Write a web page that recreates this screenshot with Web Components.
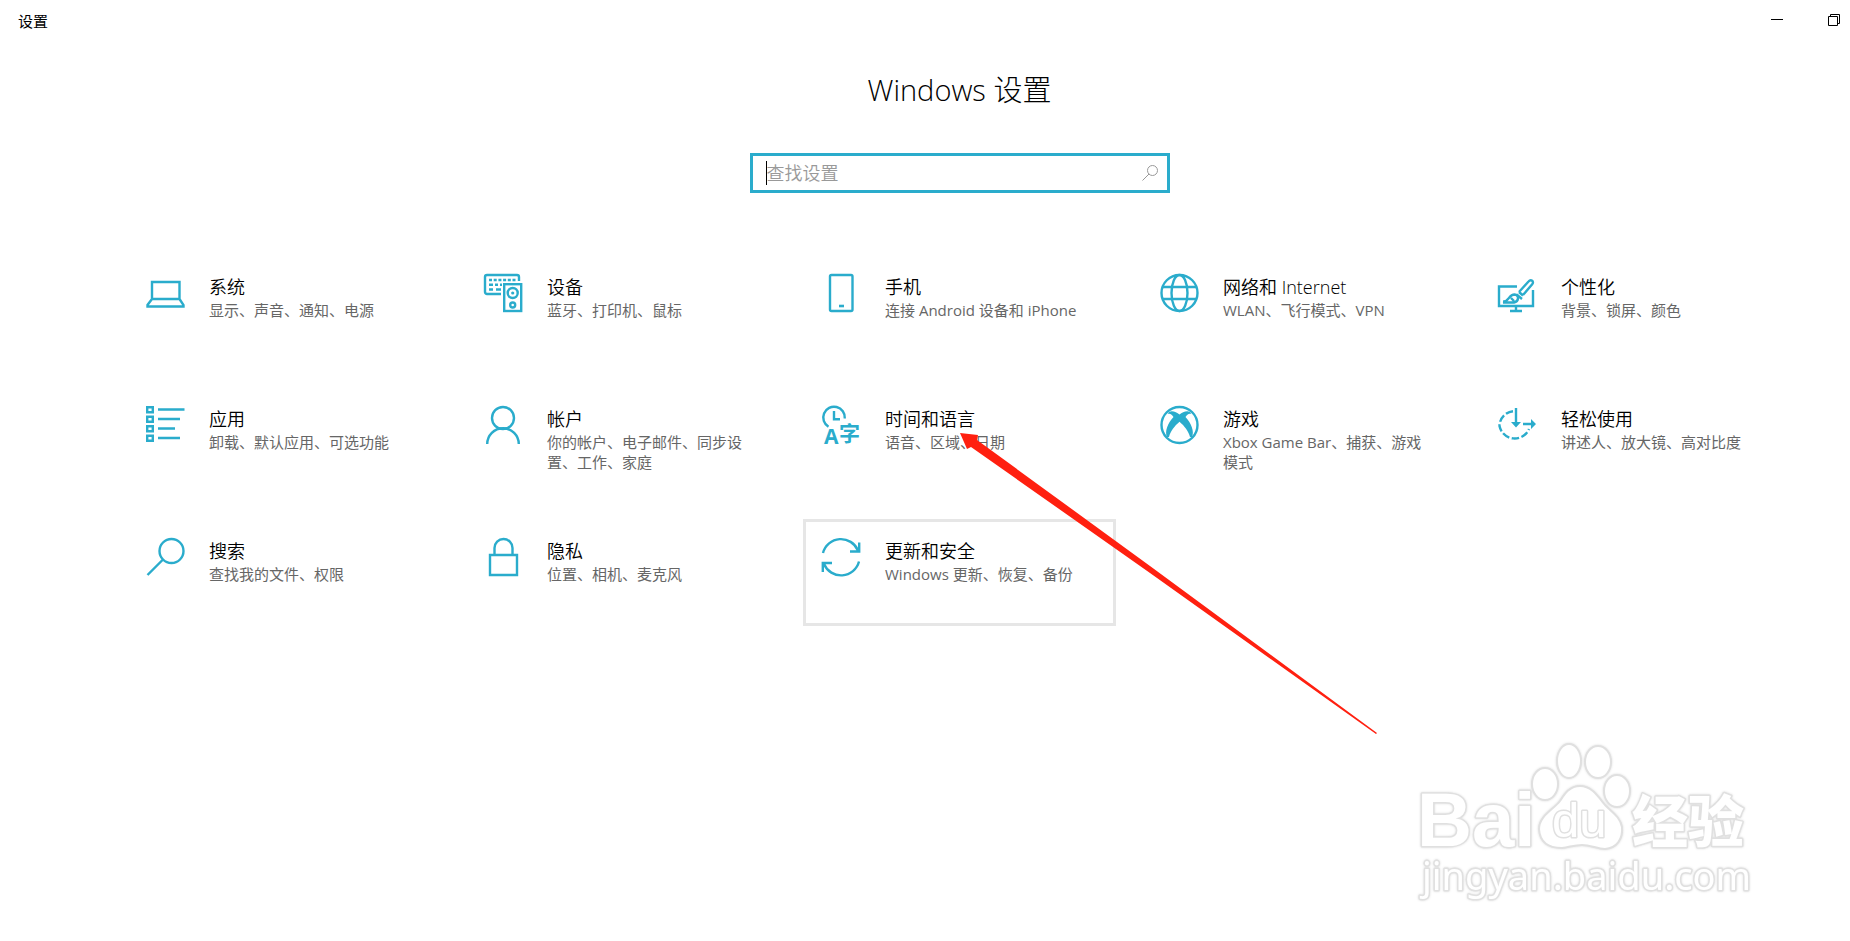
<!DOCTYPE html>
<html lang="zh-CN">
<head>
<meta charset="utf-8">
<title>设置</title>
<style>
  body {
    margin: 0;
    background: #fff;
    color: #000;
    font-family: "Open Sans", "Noto Sans CJK SC", sans-serif;
  }
</style>
</head>
<body>
<settings-app></settings-app>

<script>
// Icons, all drawn on a 38 x 38 grid
const icons = {
  system: '<path d="M6 8H33.500V25H6ZM6 25L1.500 31V32.500H37.500V31L33.500 25"/>',
  devices: `<path d="M17 20H3a2 2 0 0 1-2-2V3a2 2 0 0 1 2-2H33a2 2 0 0 1 2 2V7"/>
    <path d="M5 6H32" stroke-dasharray="3 1.7"/><path d="M5 10.7H9M11 10.7H14M16 10.7H18M5 15.5H9M12 15.5H17"/>
    <rect x="20.2" y="10.2" width="17" height="26.8"/><circle cx="28.7" cy="19" r="5"/>
    <circle cx="28.7" cy="19" r="1.6" fill="currentColor" stroke="none"/><circle cx="28.7" cy="31" r="2.5"/>`,
  phone: '<rect x="8" y="1" width="22.5" height="36" rx="1.5"/><path d="M17 32H22" stroke-width="2.6"/>',
  network: '<circle cx="19.500" cy="19" r="18"/><ellipse cx="19.500" cy="19" rx="8" ry="18"/><path d="M3 13H36M3 25H36"/>',
  personal: `<path d="M19 12.5H1V32H35V16M18 32V37M12 37H24"/>
    <path d="M21 18L30.5 7.5C33 4.5 36.500 7.500 34.200 10.200L25 21M18.500 20.500L24 25M21 18L25 21.500"/>
    <path d="M5 27.500C11 28 10.500 20.500 16.500 20.500C21.500 21 21 27.500 16 28.500H5M13 24L16 27"/>`,
  apps: `<path d="M1.200 1.200H6.800V6.300H1.200ZM1.200 10.700H6.800V15.800H1.200ZM1.200 20.200H6.800V25.300H1.200ZM1.200 29.700H6.800V34.800H1.200Z"/>
    <path d="M12 3.500H38.500M12 13H34M12 22.500H29M12 32H34"/>`,
  account: '<circle cx="19" cy="12" r="11"/><path d="M3.200 38a15.700 15.700 0 0 1 31.600 0"/>',
  time: `<path d="M6.500 20.800A10.800 10.800 0 1 1 22.800 12.500M12 5V13.200H18"/>
    <text x="2" y="38" font-size="21" font-weight="700">A</text><text x="17" y="35" font-size="21" font-weight="700">字</text>`,
  gaming: `<circle cx="19.500" cy="19" r="18"/>
    <path d="M9 6C12.500 4 16.500 6.500 19.500 8.500C22.500 6.500 26.500 4 30 6L31.500 8C28.500 7 27 9 25.500 11C31.500 17 34.500 26 32 31L30 31C28.500 25 24.500 20 19.500 15.700C14.500 20 10.500 25 9 31L7 31C4.500 26 7.500 17 13.500 11C12 9 10.500 7 7.500 8Z" fill="currentColor" stroke="none"/>`,
  ease: `<path d="M15 5.200A15 15 0 0 0 1.500 20A15.500 15.500 0 0 0 31 23" stroke-dasharray="7.500 2.500"/>
    <path d="M18 2V18M25 18H34"/><path d="M13 16H23L18 21.500ZM33 13L38 18L33 23Z" fill="currentColor" stroke="none"/>`,
  search: '<circle cx="25.500" cy="13" r="12"/><path d="M17 21.500L1.500 37"/>',
  privacy: '<path d="M6 17H33V37H6ZM10.500 17V10a9 9 0 0 1 18 0V17"/>',
  update: '<path d="M1 15A18.500 18.500 0 0 1 36 12.500M37.200 4.500V13.500H28M37 23.500A18.500 18.500 0 0 1 2 26M.800 34V25H10"/>'
};

// One category on the start page
class SettingsTile extends HTMLElement {
  constructor() {
    super();
    const shadow = this.attachShadow({ mode: 'open' });
    shadow.innerHTML = `
      <style>
        :host { display: block; }
        a {
          display: flex;
          gap: 25px;
          box-sizing: border-box;
          height: 100%;
          min-height: 107px;
          padding: 16px 22px 16px 16px;
          border: 3px solid transparent;
          color: inherit;
          text-decoration: none;
        }
        :host([selected]) a, a:hover { border-color: #e6e6e6; }
        svg {
          flex: none;
          width: 38px;
          height: 38px;
          overflow: visible;
          color: #2aaccc;
          fill: none;
          stroke: currentColor;
          stroke-width: 2.4;
        }
        svg text { fill: currentColor; stroke: none; }
        .title { display: block; font-size: 18px; line-height: 26px; font-weight: 350; }
        .desc { display: block; font-size: 15px; line-height: 20px; color: #666; }
      </style>
      <a href="#${this.dataset.icon}">
        <svg viewBox="0 0 38 38" aria-hidden="true">${icons[this.dataset.icon]}</svg>
        <span>
          <span class="title"><slot name="title"></slot></span>
          <span class="desc"><slot></slot></span>
        </span>
      </a>
    `;
  }
}

// Search box
class SettingsSearch extends HTMLElement {
  constructor() {
    super();
    const shadow = this.attachShadow({ mode: 'open' });
    shadow.innerHTML = `
      <style>
        :host { display: block; width: 420px; max-width: 100%; }
        label {
          display: flex;
          align-items: center;
          box-sizing: border-box;
          height: 40px;
          padding: 0 9px 0 13px;
          border: 3px solid #2aaccc;
        }
        .caret { width: 1px; height: 24px; background: #000; }
        label:focus-within .caret { visibility: hidden; }
        input {
          flex: 1;
          min-width: 0;
          padding: 0;
          border: 0;
          outline: 0;
          background: none;
          font: inherit;
          font-size: 18px;
          font-weight: 350;
        }
        input::placeholder { color: #999; opacity: 1; }
        svg { width: 16px; height: 16px; fill: none; stroke: #999; }
      </style>
      <label>
        <span class="caret"></span>
        <input type="text" placeholder="查找设置" aria-label="查找设置">
        <svg viewBox="0 0 16 16" aria-hidden="true"><circle cx="10.500" cy="5.500" r="5"/><path d="M7 9L.500 15.500"/></svg>
      </label>
    `;
  }
}

// Window title and buttons
class TitleBar extends HTMLElement {
  constructor() {
    super();
    const shadow = this.attachShadow({ mode: 'open' });
    shadow.innerHTML = `
      <style>
        :host {
          display: flex;
          align-items: center;
          justify-content: space-between;
          height: 40px;
          padding: 0 10px 0 18px;
          font-size: 15px;
        }
        div { display: flex; gap: 45px; }
        button { display: block; padding: 0; border: 0; background: none; }
        svg { display: block; width: 12px; height: 12px; fill: none; stroke: #000; }
      </style>
      <slot></slot>
      <div>
        <button aria-label="最小化"><svg viewBox="0 0 12 12"><path d="M0 5.500H12"/></svg></button>
        <button aria-label="还原"><svg viewBox="0 0 12 12"><path d="M.500 2.500H9.500V11.500H.500ZM2.500 2.500V.500H11.500V9.500H9.500"/></svg></button>
      </div>
    `;
  }
}

// Red pointer lying over the tiles
class PointerArrow extends HTMLElement {
  constructor() {
    super();
    const shadow = this.attachShadow({ mode: 'open' });
    shadow.innerHTML = `
      <style>
        :host { display: block; position: absolute; left: 960px; top: 432px; pointer-events: none; }
        svg { display: block; width: 418px; height: 303px; }
      </style>
      <svg viewBox="0 0 418 303" aria-hidden="true">
        <path fill="#ff2010" d="M0 1L18 3L17 8L190 134L417 301L416 302L190 141L11 15L7 17Z"/>
      </svg>
    `;
  }
}

// Watermark in the lower right corner
class SiteMark extends HTMLElement {
  constructor() {
    super();
    const shadow = this.attachShadow({ mode: 'open' });
    shadow.innerHTML = `
      <style>
        :host { display: block; position: absolute; right: 80px; bottom: 31px; pointer-events: none; }
        svg {
          display: block;
          width: 370px;
          height: 180px;
          fill: #fff;
          stroke: #e0e0e0;
          stroke-width: 2;
          stroke-linejoin: round;
          filter: drop-shadow(0 0 1px #ddd);
        }
        text { paint-order: stroke; stroke-width: 3; }
        .latin { font: bold 76px "Liberation Sans", sans-serif; }
        .du { font: 49px "Liberation Sans", sans-serif; }
        .cjk { font: 900 56px "Noto Sans CJK SC", sans-serif; }
        .url { font: 38px "Noto Sans", sans-serif; }
      </style>
      <svg viewBox="0 0 370 180">
        <text class="latin" x="17" y="116">Bai</text>
        <ellipse cx="145" cy="54" rx="13" ry="16"/>
        <ellipse cx="169" cy="31" rx="12" ry="17"/>
        <ellipse cx="198" cy="32" rx="13" ry="16"/>
        <ellipse cx="217" cy="61" rx="13" ry="16"/>
        <path d="M180 56C169 56 164 65 160 71C153 80 139 86 139 99C140 114 151 118 162 118C170 117 174 115 182 115C191 115 197 119 205 119C217 118 223 109 222 97C220 87 213 83 205 75C197 65 191 56 180 56Z"/>
        <text class="du" x="152" y="107">du</text>
        <text class="cjk" x="232" y="112">经验</text>
        <text class="url" x="22" y="160">jingyan.baidu.com</text>
      </svg>
    `;
  }
}

class SettingsApp extends HTMLElement {
  constructor() {
    super();
    const shadow = this.attachShadow({ mode: 'open' });
    shadow.innerHTML = `
      <style>
        :host { display: block; position: relative; min-height: 100vh; overflow: hidden; }
        main { padding: 28px 58px 40px 127px; }
        header { display: flex; flex-direction: column; align-items: center; gap: 41px; }
        h1 { margin: 0; font-size: 29px; line-height: 44px; font-weight: 300; }
        nav {
          display: grid;
          grid-template-columns: repeat(5, 1fr);
          gap: 25px;
          margin-top: 62px;
        }
      </style>
      <title-bar>设置</title-bar>
      <main>
        <header>
          <h1>Windows 设置</h1>
          <settings-search></settings-search>
        </header>
        <nav>
          <settings-tile data-icon="system"><span slot="title">系统</span>显示、声音、通知、电源</settings-tile>
          <settings-tile data-icon="devices"><span slot="title">设备</span>蓝牙、打印机、鼠标</settings-tile>
          <settings-tile data-icon="phone"><span slot="title">手机</span>连接 Android 设备和 iPhone</settings-tile>
          <settings-tile data-icon="network"><span slot="title">网络和 Internet</span>WLAN、飞行模式、VPN</settings-tile>
          <settings-tile data-icon="personal"><span slot="title">个性化</span>背景、锁屏、颜色</settings-tile>
          <settings-tile data-icon="apps"><span slot="title">应用</span>卸载、默认应用、可选功能</settings-tile>
          <settings-tile data-icon="account"><span slot="title">帐户</span>你的帐户、电子邮件、同步设置、工作、家庭</settings-tile>
          <settings-tile data-icon="time"><span slot="title">时间和语言</span>语音、区域、日期</settings-tile>
          <settings-tile data-icon="gaming"><span slot="title">游戏</span>Xbox Game Bar、捕获、游戏模式</settings-tile>
          <settings-tile data-icon="ease"><span slot="title">轻松使用</span>讲述人、放大镜、高对比度</settings-tile>
          <settings-tile data-icon="search"><span slot="title">搜索</span>查找我的文件、权限</settings-tile>
          <settings-tile data-icon="privacy"><span slot="title">隐私</span>位置、相机、麦克风</settings-tile>
          <settings-tile data-icon="update" selected><span slot="title">更新和安全</span>Windows 更新、恢复、备份</settings-tile>
        </nav>
      </main>
      <pointer-arrow></pointer-arrow>
      <site-mark></site-mark>
    `;
  }
}

customElements.define('settings-tile', SettingsTile);
customElements.define('settings-search', SettingsSearch);
customElements.define('title-bar', TitleBar);
customElements.define('pointer-arrow', PointerArrow);
customElements.define('site-mark', SiteMark);
customElements.define('settings-app', SettingsApp);
</script>
</body>
</html>
